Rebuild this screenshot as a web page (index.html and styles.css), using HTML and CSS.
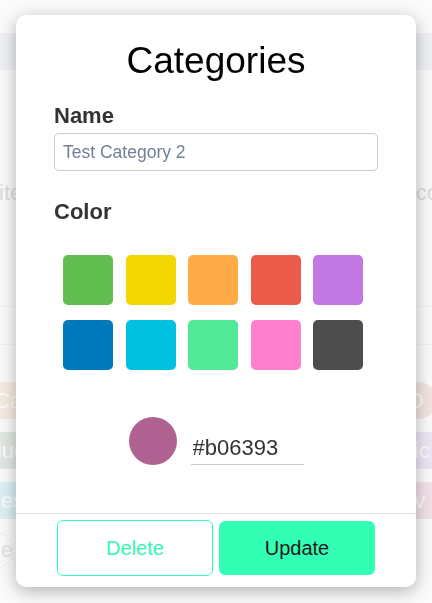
FILE: index.html
```html
<!DOCTYPE html>
<html lang="en">
<head>
<meta charset="utf-8">
<title>Categories</title>
<link rel="stylesheet" href="styles.css">
</head>
<body>
<div class="page">
  <div class="topbar"></div>
  <div class="textrow"><span class="ghost-left">ite</span><span class="ghost-right">co</span></div>
  <div class="rule rule-a"></div>
  <div class="rule rule-b"></div>
  <div class="chips">
    <div class="chip-col left">
      <div class="chip peach">Ca</div>
      <div class="chip sage">duc</div>
      <div class="chip sky">ses</div>
      <div class="dashed">e</div>
    </div>
    <div class="chip-col right">
      <div class="dot rose">D</div>
      <div class="chip lilac">hic</div>
      <div class="chip blush">av</div>
    </div>
  </div>
</div>

<div class="overlay">
  <div class="modal">
    <div class="modal-body">
      <h1 class="title">Categories</h1>
      <label class="label" for="name">Name</label>
      <input class="text-input" id="name" type="text" value="Test Category 2">
      <div class="label label-color">Color</div>
      <div class="swatches">
        <span class="swatch" style="background:#62bd50"></span>
        <span class="swatch" style="background:#f3d700"></span>
        <span class="swatch" style="background:#ffab4a"></span>
        <span class="swatch" style="background:#eb5b4a"></span>
        <span class="swatch" style="background:#c278e2"></span>
        <span class="swatch" style="background:#0079bd"></span>
        <span class="swatch" style="background:#00c2e0"></span>
        <span class="swatch" style="background:#51e898"></span>
        <span class="swatch" style="background:#ff80ce"></span>
        <span class="swatch" style="background:#4d4d4d"></span>
      </div>
      <div class="custom">
        <span class="preview" style="background:#b06393"></span>
        <input class="hex-input" type="text" value="#b06393">
      </div>
    </div>
    <div class="modal-footer">
      <button class="btn btn-outline" type="button">Delete</button>
      <button class="btn btn-solid" type="button">Update</button>
    </div>
  </div>
</div>
</body>
</html>
```

FILE: styles.css
```css
html, body {
  margin: 0;
  padding: 0;
}
body {
  width: 432px;
  height: 603px;
  overflow: hidden;
  background: #fbfbfb;
  font-family: "Liberation Sans", Arial, sans-serif;
}

/* faded page behind the modal */
.page {
  width: 432px;
  height: 603px;
  display: flex;
  flex-direction: column;
}
.topbar {
  margin-top: 33px;
  height: 37px;
  background: #eff1f4;
}
.textrow {
  margin-top: 110px;
  height: 26px;
  display: flex;
  justify-content: space-between;
  font-size: 22px;
  line-height: 26px;
  color: #dcdcdc;
}
.ghost-left { margin-left: -1px; }
.ghost-right { margin-right: -7px; }
.rule {
  height: 1px;
  background: #f2f2f2;
}
.rule-a { margin-top: 100px; }
.rule-b { margin-top: 37px; }
.chips {
  margin-top: 37px;
  display: flex;
  justify-content: space-between;
}
.chip-col {
  display: flex;
  flex-direction: column;
  gap: 13px;
}
.chip {
  height: 37px;
  width: 60px;
  font-size: 22px;
  line-height: 37px;
  color: #fdfdfd;
  border-radius: 4px;
}
.left .chip {
  margin-left: -28px;
  text-align: right;
}
.left .chip.peach { width: 50px; }
.left .chip.sage { width: 53px; }
.left .chip.sky { width: 52px; }
.right .chip {
  margin-right: -30px;
  padding-left: 2px;
}
.peach { background: #f7ece1; }
.sage { background: #e2e9e4; }
.sky { background: #dcf0f5; }
.rose { background: #f2e5e2; }
.lilac { background: #eee6f5; }
.blush { background: #f4e2eb; }
.dot {
  width: 37px;
  height: 37px;
  border-radius: 50%;
  margin-right: -22px;
  font-size: 22px;
  line-height: 37px;
  color: #fdfdfd;
  padding-left: 8px;
  box-sizing: border-box;
}
.dashed {
  margin-left: -22px;
  width: 34px;
  height: 34px;
  border: 1px dashed #e8e8e8;
  border-radius: 50%;
  font-size: 22px;
  line-height: 34px;
  color: #e6e6e6;
  text-align: right;
}

/* modal */
.overlay {
  position: fixed;
  inset: 0;
  display: flex;
  justify-content: center;
  align-items: flex-start;
  padding-top: 15px;
}
.modal {
  width: 400px;
  height: 572px;
  background: #ffffff;
  border-radius: 10px;
  box-shadow: 0 4px 18px rgba(0, 0, 0, 0.3);
  display: flex;
  flex-direction: column;
  overflow: hidden;
}
.modal-body {
  flex: 1;
  padding: 25px 38px 0 38px;
  display: flex;
  flex-direction: column;
}
.title {
  margin: 0;
  font-size: 37px;
  line-height: 42px;
  font-weight: 400;
  color: #000;
  text-align: center;
}
.label {
  display: block;
  margin-top: 21px;
  font-size: 22px;
  line-height: 26px;
  font-weight: 700;
  color: #333333;
}
.label-color {
  margin-top: 28px;
}
.text-input {
  margin: 4px 0 0 0;
  width: 324px;
  height: 38px;
  box-sizing: border-box;
  border: 1px solid #cccccc;
  border-radius: 5px;
  padding: 0 8px;
  font-family: "Liberation Sans", Arial, sans-serif;
  font-size: 17.5px;
  color: #718096;
  background: #fff;
  outline: none;
}
.swatches {
  margin: 30px 0 0 9px;
  display: grid;
  grid-template-columns: repeat(5, 50px);
  column-gap: 12.5px;
  row-gap: 15px;
}
.swatch {
  width: 50px;
  height: 50px;
  border-radius: 5px;
}
.custom {
  margin-top: 47px;
  display: flex;
  justify-content: center;
  align-items: flex-end;
  gap: 14px;
}
.preview {
  width: 48px;
  height: 48px;
  border-radius: 50%;
}
.hex-input {
  width: 113px;
  height: 38px;
  box-sizing: border-box;
  margin: 0;
  border: none;
  border-bottom: 1px solid #cccccc;
  padding: 4px 2px 0 2px;
  font-family: "Liberation Sans", Arial, sans-serif;
  font-size: 22px;
  color: #333333;
  background: #fff;
  outline: none;
}
.modal-footer {
  border-top: 1px solid #e3e3e3;
  padding: 6px 0 11px 0;
  display: flex;
  justify-content: center;
  align-items: center;
  gap: 6px;
}
.btn {
  width: 156px;
  font-family: "Liberation Sans", Arial, sans-serif;
  font-size: 20px;
  border-radius: 6px;
  cursor: pointer;
}
.btn-outline {
  height: 56px;
  background: #ffffff;
  border: 1px solid #33ffb4;
  color: #33f5b0;
}
.btn-solid {
  height: 54px;
  background: #33ffb4;
  border: none;
  color: #1a1a1a;
}
```
